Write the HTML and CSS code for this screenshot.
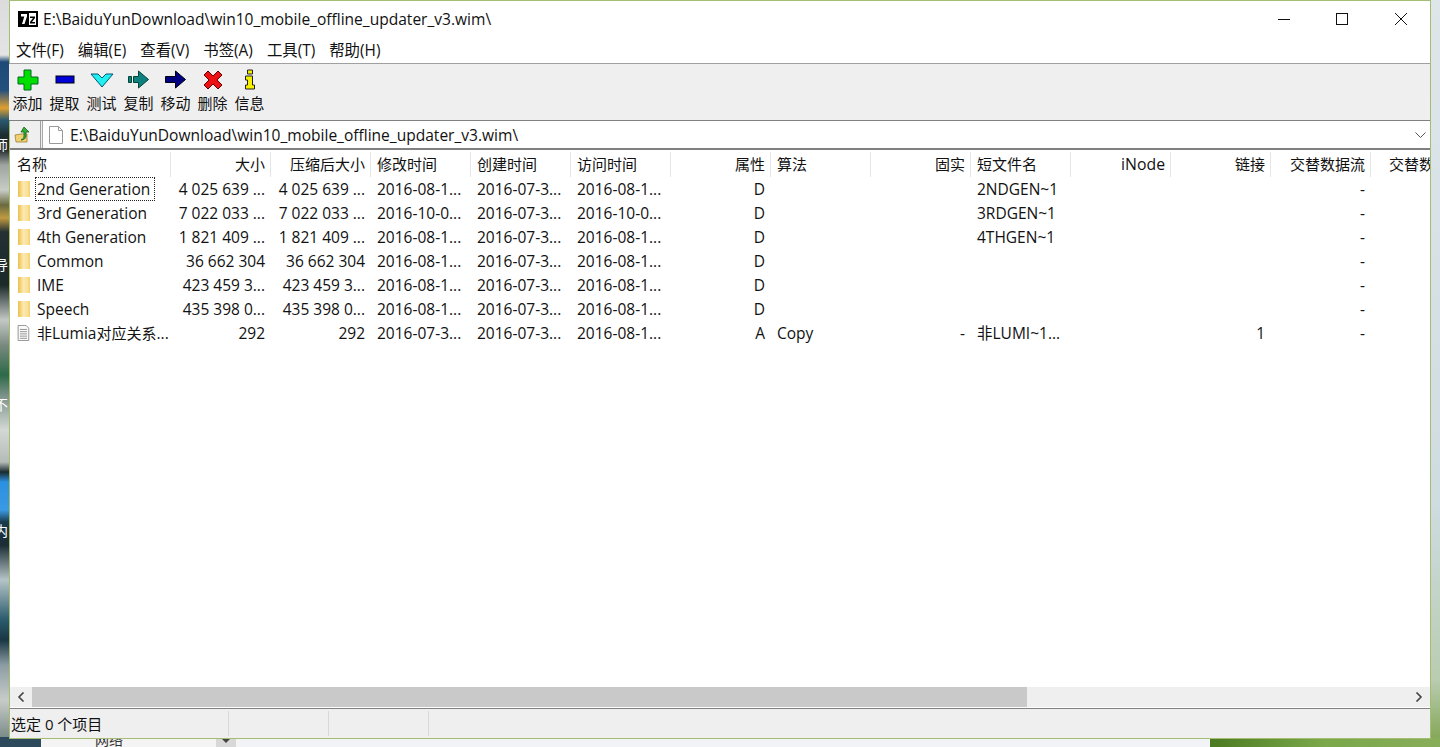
FILE: index.html
```html
<!DOCTYPE html>
<html lang="zh-CN">
<head>
<meta charset="utf-8">
<title>7-Zip</title>
<link rel="stylesheet" href="styles.css">
</head>
<body>
<div class="desktop">
  <div class="strip-left">
    <span class="icon-text t1">师</span><span class="icon-text t2">导</span><span class="icon-text t3">不</span><span class="icon-text t4">内</span>
  </div>
  <div class="strip-right"></div>
  <div class="strip-bottom"><span class="other-window"><span class="other-label">网络</span><span class="other-arrow"></span></span><span class="other-blank"></span><span class="other-green"></span></div>

  <main class="window">
    <header class="titlebar">
      <svg class="app-icon" width="20" height="16" viewBox="0 0 20 16"><rect width="20" height="16" fill="#000"/><rect x="11" y="2" width="7" height="12" fill="#fff"/><path d="M3 3h6v2.500L6.500 13H4l2.300-7.500H3z" fill="#fff"/><path d="M12 5.500h5v1.500l-3 4h3v1.500h-5V11l3-4h-3z" fill="#000"/></svg>
      <span class="title">E:\BaiduYunDownload\win10_mobile_offline_updater_v3.wim\</span>
      <div class="caption">
        <svg class="cap" width="12" height="12" viewBox="0 0 12 12"><path d="M0 6.500h12" stroke="#111" fill="none"/></svg>
        <svg class="cap" width="12" height="12" viewBox="0 0 12 12"><rect x="0.500" y="0.500" width="11" height="11" stroke="#111" fill="none"/></svg>
        <svg class="cap" width="12" height="12" viewBox="0 0 12 12"><path d="M0 0l12 12M12 0L0 12" stroke="#111" fill="none"/></svg>
      </div>
    </header>

    <nav class="menubar">
      <span>文件(F)</span><span>编辑(E)</span><span>查看(V)</span><span>书签(A)</span><span>工具(T)</span><span>帮助(H)</span>
    </nav>

    <div class="toolbar">
      <div class="tool">
        <svg width="24" height="24" viewBox="0 0 24 24"><path d="M8 2h7v7h7v7h-7v6H8v-6H2V9h6z" fill="#00e000" stroke="#062" stroke-width="1"/></svg>
        <span>添加</span>
      </div>
      <div class="tool">
        <svg width="24" height="24" viewBox="0 0 24 24"><rect x="3" y="8" width="18" height="7" fill="#0000d8" stroke="#001" stroke-width="1"/></svg>
        <span>提取</span>
      </div>
      <div class="tool">
        <svg width="24" height="24" viewBox="0 0 24 24"><path d="M1 6h7l4 4 4-4h7l-11 13z" fill="#20f0f0" stroke="#057" stroke-width="1"/></svg>
        <span>测试</span>
      </div>
      <div class="tool">
        <svg width="24" height="24" viewBox="0 0 24 24"><path d="M1.500 8.500h3v6h-3zM6.500 8.500h5V3l10 8.500-10 8.500v-5.500h-5z" fill="#0d8080" stroke="#043" stroke-width="1"/></svg>
        <span>复制</span>
      </div>
      <div class="tool">
        <svg width="24" height="24" viewBox="0 0 24 24"><path d="M1.500 8.500h10V3l10 8.500-10 8.500v-5.500h-10z" fill="#000080" stroke="#001" stroke-width="1"/></svg>
        <span>移动</span>
      </div>
      <div class="tool">
        <svg width="24" height="24" viewBox="0 0 24 24"><path d="M7 3l5 5 5-5 4 4-5 5 5 5-4 4-5-5-5 5-4-4 5-5-5-5z" fill="#ee1111" stroke="#600" stroke-width="1"/></svg>
        <span>删除</span>
      </div>
      <div class="tool">
        <svg width="24" height="24" viewBox="0 0 24 24"><path d="M9.500 2h5v4h-5zM7.500 8h7v9h2v4h-9v-4h2v-5h-2z" fill="#f4f000" stroke="#222" stroke-width="1"/></svg>
        <span>信息</span>
      </div>
    </div>

    <div class="addressbar">
      <div class="up-btn">
        <svg width="18" height="18" viewBox="0 0 18 18"><path d="M1 9l6-1 6 0v8H2z" fill="#f0d070" stroke="#a08030" stroke-width="0.800"/><path d="M10 1l5 5h-3v4c0 2-2 4-5 4 2-1 3-2 3-4V6H7z" fill="#30b030" stroke="#206020" stroke-width="0.800"/></svg>
      </div>
      <div class="path-box">
        <svg width="16" height="18" viewBox="0 0 16 18"><path d="M1.500 0.500h9l4 4v13h-13z" fill="#fff" stroke="#9a9a9a"/><path d="M10.500 0.500v4h4" fill="none" stroke="#9a9a9a"/></svg>
        <span class="path-text">E:\BaiduYunDownload\win10_mobile_offline_updater_v3.wim\</span>
        <svg class="chev" width="11" height="6" viewBox="0 0 11 6"><path d="M0.500 0.500l5 5 5-5" fill="none" stroke="#555"/></svg>
      </div>
    </div>

    <section class="list">
      <div class="row head">
        <span class="c first">名称</span><span class="c r">大小</span><span class="c r">压缩后大小</span><span class="c">修改时间</span><span class="c">创建时间</span><span class="c">访问时间</span><span class="c r">属性</span><span class="c">算法</span><span class="c r">固实</span><span class="c">短文件名</span><span class="c r latin">iNode</span><span class="c r">链接</span><span class="c r">交替数据流</span><span class="c r last">交替数据流大小</span>
      </div>

      <div class="row">
        <span class="c name"><svg class="folder" width="16" height="16" viewBox="0 0 16 16"><defs><linearGradient id="folder-fill" x1="0" x2="1" y1="0" y2="0"><stop offset="0" stop-color="#edbf4a"/><stop offset="0.450" stop-color="#fbe9b0"/><stop offset="0.800" stop-color="#f9e09a"/><stop offset="1" stop-color="#f3cf6c"/></linearGradient></defs><path d="M3 0h12v16H3z" fill="url(#folder-fill)"/></svg><span class="focus">2nd Generation</span></span><span class="c r">4 025 639 ...</span><span class="c r">4 025 639 ...</span><span class="c">2016-08-1...</span><span class="c">2016-07-3...</span><span class="c">2016-08-1...</span><span class="c r">D</span><span class="c"></span><span class="c"></span><span class="c">2NDGEN~1</span><span class="c"></span><span class="c"></span><span class="c r">-</span>
      </div>
      <div class="row">
        <span class="c name"><svg class="folder" width="16" height="16" viewBox="0 0 16 16"><path d="M3 0h12v16H3z" fill="url(#folder-fill)"/></svg><span class="label">3rd Generation</span></span><span class="c r">7 022 033 ...</span><span class="c r">7 022 033 ...</span><span class="c">2016-10-0...</span><span class="c">2016-07-3...</span><span class="c">2016-10-0...</span><span class="c r">D</span><span class="c"></span><span class="c"></span><span class="c">3RDGEN~1</span><span class="c"></span><span class="c"></span><span class="c r">-</span>
      </div>
      <div class="row">
        <span class="c name"><svg class="folder" width="16" height="16" viewBox="0 0 16 16"><path d="M3 0h12v16H3z" fill="url(#folder-fill)"/></svg><span class="label">4th Generation</span></span><span class="c r">1 821 409 ...</span><span class="c r">1 821 409 ...</span><span class="c">2016-08-1...</span><span class="c">2016-07-3...</span><span class="c">2016-08-1...</span><span class="c r">D</span><span class="c"></span><span class="c"></span><span class="c">4THGEN~1</span><span class="c"></span><span class="c"></span><span class="c r">-</span>
      </div>
      <div class="row">
        <span class="c name"><svg class="folder" width="16" height="16" viewBox="0 0 16 16"><path d="M3 0h12v16H3z" fill="url(#folder-fill)"/></svg><span class="label">Common</span></span><span class="c r">36 662 304</span><span class="c r">36 662 304</span><span class="c">2016-08-1...</span><span class="c">2016-07-3...</span><span class="c">2016-08-1...</span><span class="c r">D</span><span class="c"></span><span class="c"></span><span class="c"></span><span class="c"></span><span class="c"></span><span class="c r">-</span>
      </div>
      <div class="row">
        <span class="c name"><svg class="folder" width="16" height="16" viewBox="0 0 16 16"><path d="M3 0h12v16H3z" fill="url(#folder-fill)"/></svg><span class="label">IME</span></span><span class="c r">423 459 3...</span><span class="c r">423 459 3...</span><span class="c">2016-08-1...</span><span class="c">2016-07-3...</span><span class="c">2016-08-1...</span><span class="c r">D</span><span class="c"></span><span class="c"></span><span class="c"></span><span class="c"></span><span class="c"></span><span class="c r">-</span>
      </div>
      <div class="row">
        <span class="c name"><svg class="folder" width="16" height="16" viewBox="0 0 16 16"><path d="M3 0h12v16H3z" fill="url(#folder-fill)"/></svg><span class="label">Speech</span></span><span class="c r">435 398 0...</span><span class="c r">435 398 0...</span><span class="c">2016-08-1...</span><span class="c">2016-07-3...</span><span class="c">2016-08-1...</span><span class="c r">D</span><span class="c"></span><span class="c"></span><span class="c"></span><span class="c"></span><span class="c"></span><span class="c r">-</span>
      </div>
      <div class="row">
        <span class="c name"><svg class="folder" width="16" height="18" viewBox="0 0 16 18"><path d="M2.500 0.500h9l3 3v14h-12z" fill="#fafafa" stroke="#8a8a8a"/><path d="M4.500 5h8M4.500 7.500h8M4.500 10h8M4.500 12.500h8M4.500 15h8" stroke="#8a8a8a"/></svg><span class="label"><span class="cjk">非</span>Lumia<span class="cjk">对应关系</span>...</span></span><span class="c r">292</span><span class="c r">292</span><span class="c">2016-07-3...</span><span class="c">2016-07-3...</span><span class="c">2016-08-1...</span><span class="c r">A</span><span class="c">Copy</span><span class="c r">-</span><span class="c">非LUMI~1...</span><span class="c"></span><span class="c r">1</span><span class="c r">-</span>
      </div>
    </section>

    <div class="hscroll">
      <span class="arrow"><svg width="8" height="10" viewBox="0 0 8 10"><path d="M6.500 0.500L2 5l4.500 4.500" fill="none" stroke="#444" stroke-width="1.600"/></svg></span>
      <span class="track"><span class="thumb"></span></span>
      <span class="arrow"><svg width="8" height="10" viewBox="0 0 8 10"><path d="M1.500 0.500L6 5l-4.500 4.500" fill="none" stroke="#444" stroke-width="1.600"/></svg></span>
    </div>

    <footer class="statusbar">
      <span class="st first">选定 0 个项目</span><span class="st"></span><span class="st"></span><span class="st rest"></span>
    </footer>
  </main>
</div>
</body>
</html>
```
FILE: styles.css
```css
* { box-sizing: border-box; }
html, body { margin: 0; height: 100%; }
body { overflow: hidden; font-family: "Open Sans", "Noto Sans CJK SC", sans-serif; color: #111; }
.desktop { position: relative; width: 1440px; height: 747px; overflow: hidden; background: #b9c9b0; }

.strip-left { position: absolute; left: 0; top: 0; width: 10px; height: 747px; overflow: hidden;
  background: linear-gradient(180deg, #dcdcdc 0, #e4e4e4 55px, #1e4a78 62px, #24507e 90px, #e0a030 108px, #2a5a70 120px, #1c2c30 135px, #262e30 150px, #a0a4a0 165px, #c8ccc6 190px, #6a6a40 205px, #c09a40 218px, #243034 232px, #1c2a2a 285px, #c4c8c4 320px, #7a8a80 345px, #2c6a48 375px, #7a9088 395px, #d4d8d4 430px, #b4bcb8 462px, #1a2a30 472px, #2a90e0 482px, #3a9ae4 510px, #1a3a4c 522px, #1c2c34 545px, #b4c4c8 580px, #2a5a6c 620px, #1a3644 640px, #8c9ca4 665px, #c8ccc8 700px, #7a8a88 738px); }
.icon-text { position: absolute; left: -6px; font-size: 14px; line-height: 16px; color: #fff; }
.t1 { top: 137px; }
.t2 { top: 257px; }
.t3 { top: 397px; }
.t4 { top: 523px; }

.strip-right { position: absolute; right: 0; top: 0; width: 10px; height: 747px;
  background: linear-gradient(180deg, #dfe6ea 0, #cfdce2 500px, #b9ccb0 680px, #7ea24c 747px); }
.strip-bottom { position: absolute; left: 0; bottom: 0; width: 1440px; height: 10px; display: flex; }
.other-window { width: 240px; background: #f4f4f4; border-left: 41px solid #2c4a5c; position: relative; overflow: hidden; }
.other-label { position: absolute; left: 54px; top: -5px; font-size: 14px; line-height: 16px; color: #333; }
.other-arrow { position: absolute; left: 175px; top: 0; width: 20px; height: 10px; background: #d8d8d8; }
.other-arrow::after { content: ""; position: absolute; left: 6px; top: 2px; border-top: 4px solid #444; border-left: 4px solid transparent; border-right: 4px solid transparent; }
.other-blank { width: 970px; background: #f2f3f6; }
.other-green { width: 230px; background: linear-gradient(90deg, #4c7a22, #7aa84a 50%, #88ad5a); }

.window { position: absolute; left: 9px; top: 0; width: 1422px; height: 739px; display: flex; flex-direction: column; background: #fff;
  border: 1px solid #a3bd72; }

.titlebar { height: 37px; flex: none; display: flex; align-items: center; padding-left: 8px; background: #fff; }
.app-icon { flex: none; margin-top: -1px; }
.title { font-size: 15.55px; margin-left: 5px; white-space: nowrap; margin-top: -1px; }
.caption { margin-left: auto; display: flex; gap: 46px; padding-right: 23px; }
.cap { width: 12px; height: 12px; margin-top: -1px; display: block; }
.cap:last-child { margin-left: 1px; }

.menubar { height: 25px; flex: none; display: flex; gap: 14px; align-items: center; padding: 0 0 2px 6px; font-size: 15.4px; background: #fff; white-space: nowrap; }

.toolbar { height: 58px; flex: none; display: flex; margin-left: -1px; padding-top: 4px; background: #efefef; border-top: 1px solid #a0a0a0; border-bottom: 1px solid #808080; }
.tool { width: 37px; display: flex; flex-direction: column; align-items: center; font-size: 15px; line-height: 20px; white-space: nowrap; }
.tool svg { display: block; margin-bottom: 1px; flex: none; }

.addressbar { height: 29px; flex: none; display: flex; background: #efefef; border-bottom: 2px solid #808080; }
.up-btn { width: 31px; flex: none; display: flex; align-items: center; padding-left: 4px; border-right: 1px solid #a0a0a0; }
.path-box { flex: 1; display: flex; align-items: center; margin-left: 1px; padding-left: 5px; background: #fff; border-left: 1px solid #a8a8a8; font-size: 15.55px; white-space: nowrap; }
.path-text { margin-left: 6px; }
.chev { margin-left: auto; margin-right: 4px; }

.list { flex: 1; min-height: 0; overflow: hidden; background: #fff; }
.row { display: grid; grid-template-columns: 161px repeat(13, 100px); height: 24px; align-items: start; font-size: 15.5px; white-space: nowrap; }
.head { height: 27px; font-size: 15px; }
.c { display: block; height: 24px; padding: 0 6px; line-height: 25px; min-width: 0; overflow: hidden; }
.r { text-align: right; }
.head .c { height: 25px; margin-top: 2px; border-right: 1px solid #e5e5e5; line-height: 25px; padding: 0 5px 0 6px; }
.head .first { padding-left: 7px; }
.head .latin { font-size: 15.8px; }
.head .last { border-right: 0; text-align: left; padding-left: 18px; }
.name { display: flex; align-items: center; padding: 0 2px 0 5px; }
.folder { flex: none; width: 16px; height: 16px; margin-right: 2px; margin-top: -1px; }
.label { margin-left: 2px; padding-left: 2px; }
.cjk { font-size: 15px; }
.focus { margin-left: 2px; padding: 0 5px 0 2px; height: 24px; line-height: 25px; outline: 1px dotted #222; outline-offset: -1px; }

.hscroll { height: 20px; flex: none; display: flex; background: #efefef; margin-bottom: 1px; }
.arrow { width: 22px; flex: none; display: flex; align-items: center; justify-content: center; }
.track { flex: 1; display: block; }
.thumb { display: block; width: 995px; height: 20px; background: #c9c9c9; }

.statusbar { height: 30px; flex: none; display: flex; align-items: stretch; padding: 2px 0; background: #efefef; border-top: 1px solid #808080; font-size: 15px; }
.st { width: 100px; border-right: 1px solid #d8d8d8; line-height: 26px; white-space: nowrap; }
.st.first { width: 219px; padding-left: 1px; }
.st.rest { flex: 1; border-right: 0; }
```
